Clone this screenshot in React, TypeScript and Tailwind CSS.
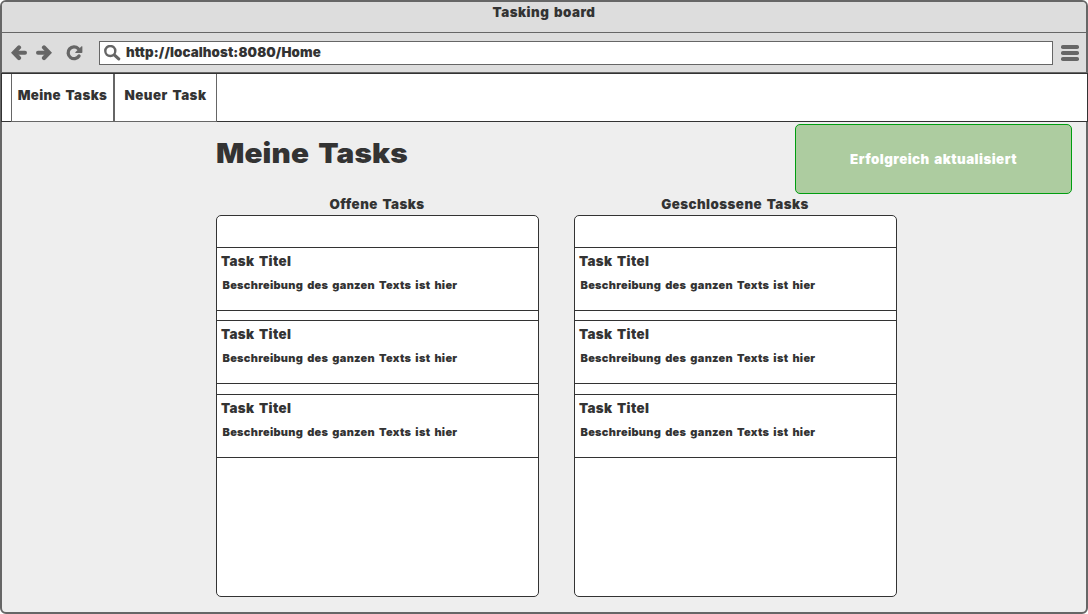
const TEXT = "text-[13.33px] leading-4 whitespace-nowrap [word-spacing:1.5px]";

function BackIcon() {
  return (
    <svg className="block" width="16" height="16" viewBox="0 0 16 16" fill="none" stroke="#666" strokeLinejoin="miter" strokeLinecap="round">
      <path d="M8 2.4 2.9 7.7 8 13" strokeWidth="4.2" />
      <path d="M5 7.7h9" strokeWidth="4" />
    </svg>
  );
}

function ForwardIcon() {
  return (
    <svg className="block" width="16" height="16" viewBox="0 0 16 16" fill="none" stroke="#666" strokeLinejoin="miter" strokeLinecap="round">
      <path d="M8 2.4 13.1 7.7 8 13" strokeWidth="4.2" />
      <path d="M11 7.7H2" strokeWidth="4" />
    </svg>
  );
}

function ReloadIcon() {
  return (
    <svg className="block" width="17" height="16" viewBox="0 0 17 16">
      <path d="M12.2 3.6A5.9 5.9 0 1 0 13 11" fill="none" stroke="#666" strokeWidth="3.3" strokeLinecap="round" />
      <path d="M15.6 1.3q.8-.4.8.5v5.4q0 .8-.8.8H9.8q-1 0-.5-.8z" fill="#666" />
    </svg>
  );
}

function SearchIcon() {
  return (
    <svg className="block" width="17" height="16" viewBox="0 0 17 16" fill="none" stroke="#666" strokeLinecap="round">
      <circle cx="6.3" cy="6" r="5" strokeWidth="2.4" />
      <path d="m10.8 10.4 3.9 3.5" strokeWidth="3.2" />
    </svg>
  );
}

function MenuIcon() {
  return (
    <svg className="block" width="18" height="16" viewBox="0 0 18 16" fill="#666">
      <rect y="0" width="18" height="4" rx="1.8" />
      <rect y="6" width="18" height="4" rx="1.8" />
      <rect y="12" width="18" height="4" rx="1.8" />
    </svg>
  );
}

function Task() {
  return (
    <article className="h-16 border-y border-[#333] pl-1">
      <h3 className={`pt-[5px] tracking-[0.37px] ${TEXT}`}>Task Titel</h3>
      <p className="mt-2 ml-[1.5px] text-[11px] leading-4 tracking-[0.29px] whitespace-nowrap [word-spacing:1.6px]">
        Beschreibung des ganzen Texts ist hier
      </p>
    </article>
  );
}

function Column({ title }: { title: string }) {
  return (
    <section className="w-[323px]">
      <h2 className={`pr-px text-center tracking-[0.45px] ${TEXT}`}>{title}</h2>
      <div className="mt-[3px] h-[382px] rounded-[5px] border border-[#333] bg-white pt-[31px]">
        <Task />
        <div className="h-[9px]" />
        <Task />
        <div className="h-[10px]" />
        <Task />
      </div>
    </section>
  );
}

export default function App() {
  return (
    <div className="h-[614px] w-[1088px] bg-white font-[Inter,'Liberation_Sans',sans-serif] font-black text-[#333]">
      <div className="flex h-full flex-col rounded-[6px] border-2 border-[#666] bg-[#eee]">
        <header className="rounded-t-[4px] bg-[#ddd]">
          <div className={`h-[31px] border-b border-[#666] pt-[2px] text-center tracking-[0.5px] ${TEXT}`}>Tasking board</div>
          <div className="flex h-10 items-center border-b border-[#666] pr-[7px] pl-[9px]">
            <BackIcon />
            <div className="ml-[9px]"><ForwardIcon /></div>
            <div className="ml-[14px]"><ReloadIcon /></div>
            <div className="ml-[16px] flex h-6 w-[954px] items-center border border-[#666] bg-white pl-1">
              <SearchIcon />
              <span className={`-mt-px ml-[5px] tracking-[0.1px] ${TEXT}`}>http://localhost:8080/Home</span>
            </div>
            <div className="mt-px ml-[8px]"><MenuIcon /></div>
          </div>
        </header>

        <nav className="-mr-[2px] -ml-px flex h-[49px] shrink-0 border border-[#333] bg-white">
          <div className="w-[9px]" />
          <a className={`-mb-px flex w-[103px] justify-center border border-t-0 border-[#666] pt-[13px] tracking-[0.37px] ${TEXT}`}>Meine Tasks</a>
          <a className={`-mb-px flex w-[103px] justify-center border border-t-0 border-[#666] pt-[13px] tracking-[0.5px] ${TEXT}`}>Neuer Task</a>
        </nav>

        <main className="flex grow flex-col pt-[2px]">
          <div className="flex h-[72px] justify-between pr-[14px] pl-[214px]">
            <h1 className="mt-[13px] h-8 origin-left scale-x-[1.08] text-[27.5px] leading-8 tracking-[0.1px] whitespace-nowrap [word-spacing:3px]">
              Meine Tasks
            </h1>
            <div className={`flex h-[70px] w-[277px] items-center justify-center rounded-[5px] border border-[#009e0f] bg-[#adcca0] tracking-[0.46px] text-white ${TEXT}`}>
              Erfolgreich aktualisiert
            </div>
          </div>
          <div className="flex gap-[35px] pl-[214px]">
            <Column title="Offene Tasks" />
            <Column title="Geschlossene Tasks" />
          </div>
        </main>
      </div>
    </div>
  );
}
